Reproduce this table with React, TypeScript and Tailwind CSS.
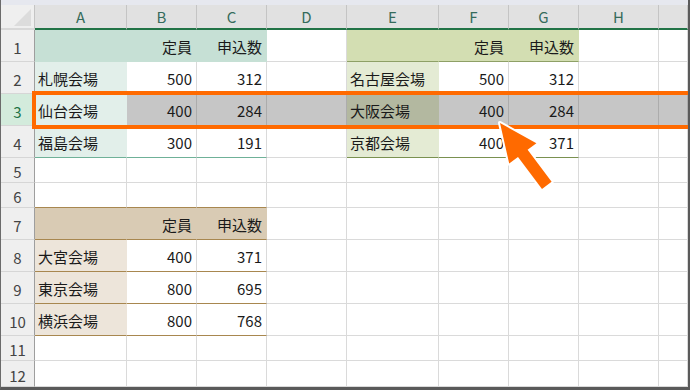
import React from 'react';

type CellDef = { t?: string; n?: boolean; k: string };

const colHeads = ['A', 'B', 'C', 'D', 'E', 'F', 'G', 'H', ''];
const colW = ['w-[92px]', 'w-[70px]', 'w-[70px]', 'w-[80px]', 'w-[92px]', 'w-[70px]', 'w-[70px]', 'w-[80px]', 'w-[29px]'];

// cell colour sets (bg + right/bottom border)
const W = 'border-r-[#dadada] border-b-[#dadada]';
const T1H = 'bg-[#c6e0d5] border-r-[#c6e0d5] border-b-[#c6e0d5]';
const T1A = 'bg-[#e2efea] border-r-[#e2efea] border-b-[#e2efea]';
const T1A4 = 'bg-[#e2efea] border-r-[#e2efea] border-b-[#6fb198]';
const T1W4 = 'border-r-[#dadada] border-b-[#6fb198]';
const T2H = 'bg-[#d3deb2] border-r-[#d3deb2] border-b-[#8ea066]';
const T2E = 'bg-[#e4ebd4] border-r-[#e4ebd4] border-b-[#e4ebd4]';
const T2E4 = 'bg-[#e4ebd4] border-r-[#e4ebd4] border-b-[#7a9150]';
const T2W4 = 'border-r-[#dadada] border-b-[#7a9150]';
const SEL = 'bg-[#c6c6c6] border-r-[#acacac] border-b-[#c6c6c6]';
const SELE = 'bg-[#b3b8a0] border-r-[#b3b8a0] border-b-[#b3b8a0]';
const T3TOP = 'border-r-[#dadada] border-b-[#a8874f]';
const T3H = 'bg-[#d9cbb4] border-r-[#d9cbb4] border-b-[#a8874f]';
const T3A = 'bg-[#ede5da] border-r-[#ede5da] border-b-[#a8874f]';
const T3W = 'border-r-[#dadada] border-b-[#a8874f]';

const blank = (n: number): CellDef[] => Array.from({ length: n }, () => ({ k: W }));

const rows: { h: string; cells: CellDef[] }[] = [
  {
    h: 'h-[32px]',
    cells: [
      { k: T1H }, { t: '定員', n: true, k: T1H }, { t: '申込数', n: true, k: T1H }, { k: W },
      { k: T2H }, { t: '定員', n: true, k: T2H }, { t: '申込数', n: true, k: T2H }, { k: W }, { k: W },
    ],
  },
  {
    h: 'h-[32px]',
    cells: [
      { t: '札幌会場', k: T1A }, { t: '500', n: true, k: W }, { t: '312', n: true, k: W }, { k: W },
      { t: '名古屋会場', k: T2E }, { t: '500', n: true, k: W }, { t: '312', n: true, k: W }, { k: W }, { k: W },
    ],
  },
  {
    h: 'h-[32px]',
    cells: [
      { t: '仙台会場', k: T1A }, { t: '400', n: true, k: SEL }, { t: '284', n: true, k: SEL }, { k: SEL },
      { t: '大阪会場', k: SELE }, { t: '400', n: true, k: SEL }, { t: '284', n: true, k: SEL }, { k: SEL }, { k: SEL },
    ],
  },
  {
    h: 'h-[32px]',
    cells: [
      { t: '福島会場', k: T1A4 }, { t: '300', n: true, k: T1W4 }, { t: '191', n: true, k: T1W4 }, { k: W },
      { t: '京都会場', k: T2E4 }, { t: '400', n: true, k: T2W4 }, { t: '371', n: true, k: T2W4 }, { k: W }, { k: W },
    ],
  },
  { h: 'h-[25px]', cells: blank(9) },
  { h: 'h-[25px]', cells: [{ k: T3TOP }, { k: T3TOP }, { k: T3TOP }, ...blank(6)] },
  {
    h: 'h-[32px]',
    cells: [{ k: T3H }, { t: '定員', n: true, k: T3H }, { t: '申込数', n: true, k: T3H }, ...blank(6)],
  },
  {
    h: 'h-[32px]',
    cells: [{ t: '大宮会場', k: T3A }, { t: '400', n: true, k: T3W }, { t: '371', n: true, k: T3W }, ...blank(6)],
  },
  {
    h: 'h-[32px]',
    cells: [{ t: '東京会場', k: T3A }, { t: '800', n: true, k: T3W }, { t: '695', n: true, k: T3W }, ...blank(6)],
  },
  {
    h: 'h-[32px]',
    cells: [{ t: '横浜会場', k: T3A }, { t: '800', n: true, k: T3W }, { t: '768', n: true, k: T3W }, ...blank(6)],
  },
  { h: 'h-[25px]', cells: blank(9) },
  { h: 'h-[26px]', cells: blank(9) },
];

export default function App() {
  return (
    <div className="relative w-[690px] h-[390px] overflow-hidden bg-white border-l border-l-[#6b6b6b] border-r-2 border-r-[#5a5a5a] border-b-[3px] border-b-[#5a5a5a] font-['Noto_Sans_CJK_JP',sans-serif] text-[15px] text-[#1a1a1a]">
      <div className="h-[5px] bg-[#e6e8ef]" />

      {/* column headers */}
      <div className="flex h-[25px]">
        <div className="w-[34px] shrink-0 bg-[#efefef] border-r border-r-[#c4c4c4] border-b-2 border-b-[#d8d8d8] flex items-end justify-end pr-[3px] pb-[2px]">
          <svg width="17" height="17" viewBox="0 0 17 17">
            <polygon points="17,0 17,17 0,17" fill="#dcdcdc" />
          </svg>
        </div>
        {colHeads.map((c, i) => (
          <div
            key={i}
            className={`${colW[i]} shrink-0 bg-[#e1e1e1] border-r border-r-[#c4c4c4] border-b-2 border-b-[#217346] flex items-center justify-center text-[#356b5b] leading-none`}
          >
            {c}
          </div>
        ))}
      </div>

      {/* body rows */}
      {rows.map((r, ri) => (
        <div key={ri} className={`flex ${r.h}`}>
          <div
            className={`w-[34px] shrink-0 border-r border-r-[#9e9e9e] border-b border-b-[#d6d6d6] flex items-center justify-center pt-[3px] leading-none ${
              ri === 2 ? 'bg-[#d3ebdc] text-[#217346]' : 'bg-[#efefef] text-[#444]'
            }`}
          >
            {ri + 1}
          </div>
          {r.cells.map((c, ci) => (
            <div
              key={ci}
              className={`${colW[ci]} shrink-0 border-r border-b ${c.k} flex items-center pt-[2px] leading-none whitespace-nowrap ${
                c.n ? 'justify-end pr-[4px]' : 'pl-[3px]'
              }`}
            >
              {c.t}
            </div>
          ))}
        </div>
      ))}

      {/* highlight box around row 3 */}
      <div className="absolute left-[31px] top-[91px] w-[680px] h-[38px] border-4 border-[#ff6a00]" />

      {/* arrow */}
      <svg className="absolute left-0 top-0 pointer-events-none" width="690" height="390">
        <polygon
          points="499,123 535.4,143.2 526.6,149.8 550.6,181.8 541,189 517,157 508.2,163.6"
          fill="#ff6a00"
          stroke="#ffffff"
          strokeWidth="4"
          strokeLinejoin="round"
          paintOrder="stroke"
        />
      </svg>
    </div>
  );
}
